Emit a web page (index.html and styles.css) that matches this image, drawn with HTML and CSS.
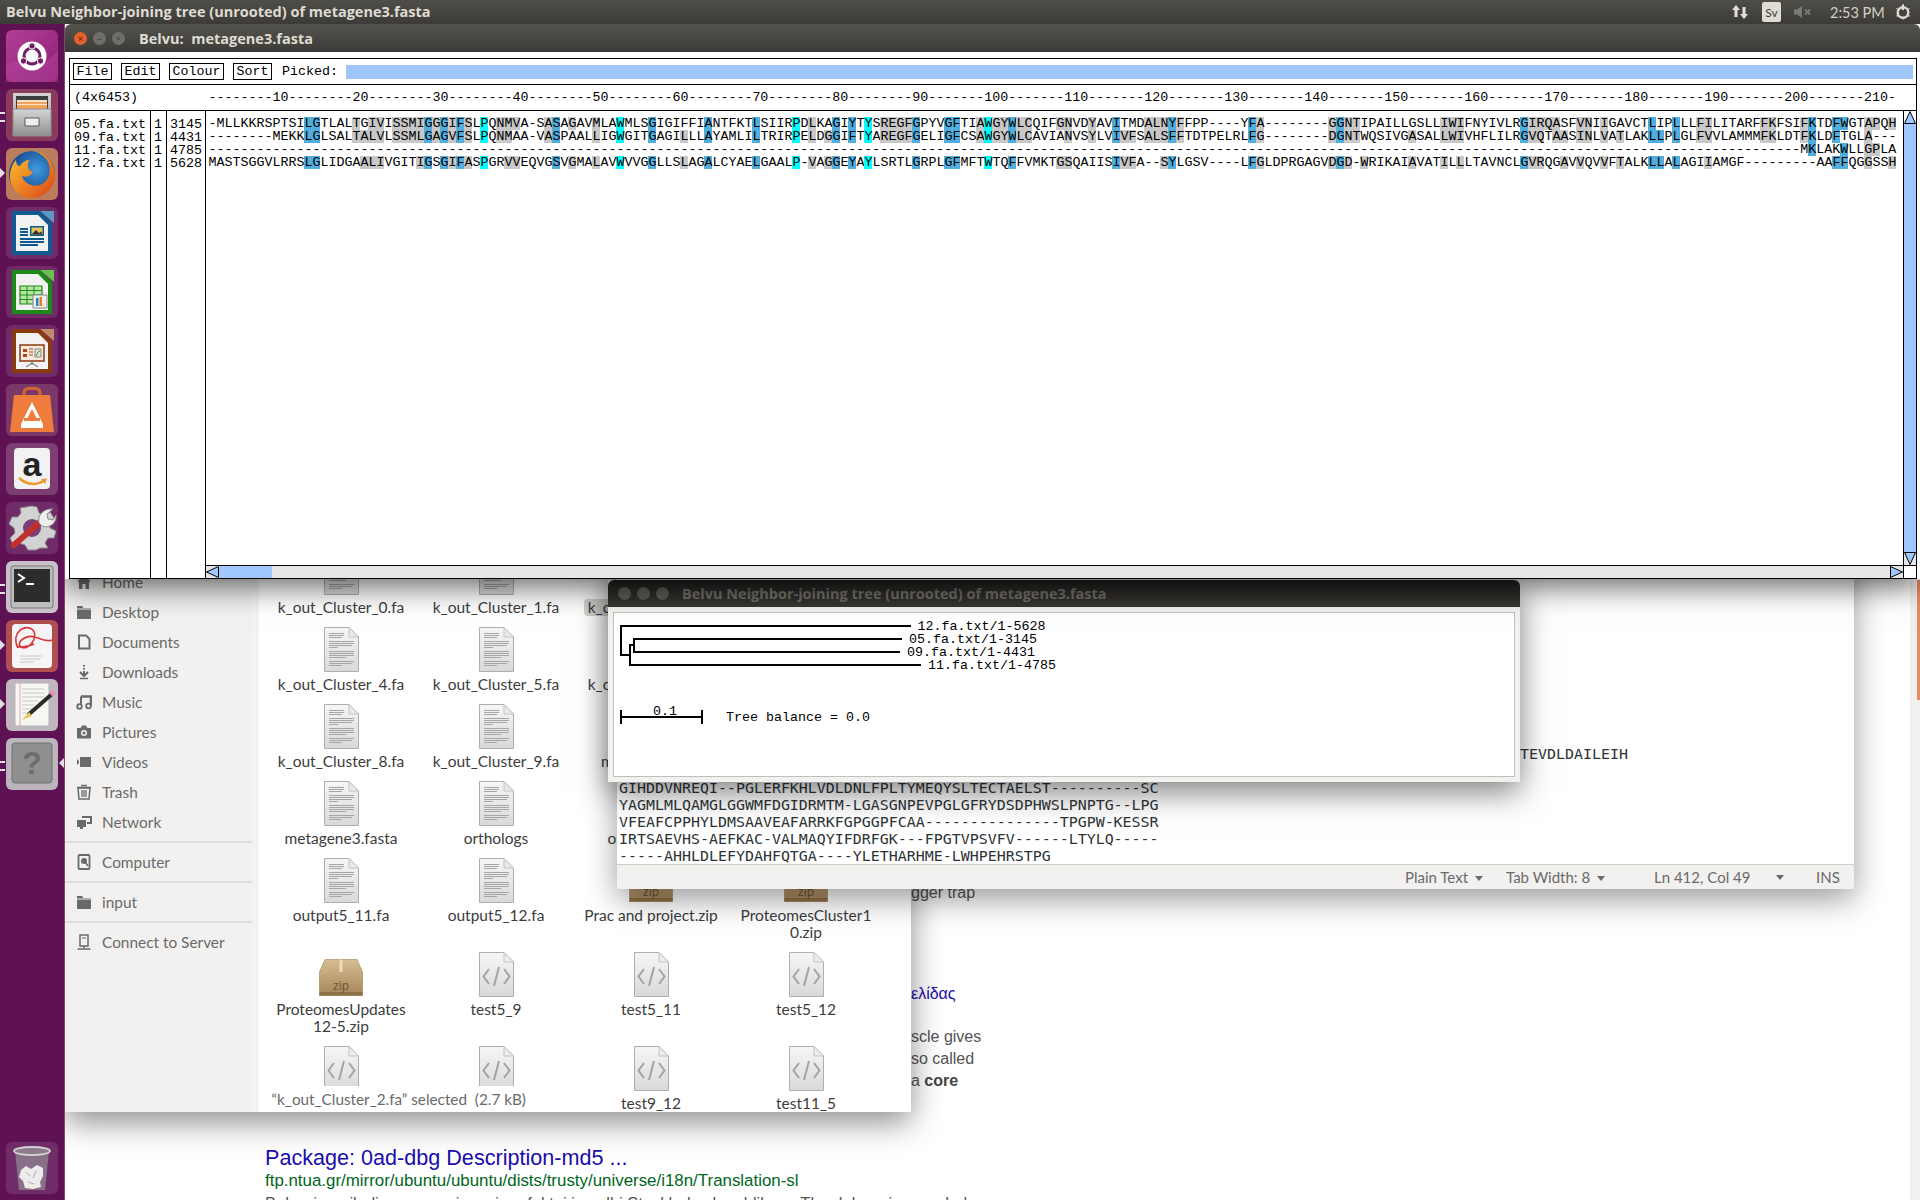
FILE: index.html
```html
<!DOCTYPE html>
<html lang="en">
<head>
<meta charset="utf-8">
<title>Belvu desktop</title>
<link rel="stylesheet" href="styles.css">
</head>
<body>
<svg class="defs" width="0" height="0" aria-hidden="true">
  <defs>
    <linearGradient id="docfill" x1="0" y1="0" x2="0" y2="1"><stop offset="0" stop-color="#f6f6f6"/><stop offset="1" stop-color="#d9d9d9"/></linearGradient>
    <linearGradient id="zipfill" x1="0" y1="0" x2="0" y2="1"><stop offset="0" stop-color="#d8bd92"/><stop offset="1" stop-color="#a5855a"/></linearGradient>
    <linearGradient id="cabfill" x1="0" y1="0" x2="0" y2="1"><stop offset="0" stop-color="#d4d4d4"/><stop offset="1" stop-color="#8f8f8f"/></linearGradient>
    <radialGradient id="foxglobe" cx=".6" cy=".4" r=".6"><stop offset="0" stop-color="#3f9be0"/><stop offset="1" stop-color="#123f86"/></radialGradient>
    <linearGradient id="foxfur" x1="0" y1="0" x2="1" y2="1"><stop offset="0" stop-color="#ffc52e"/><stop offset="1" stop-color="#d9431a"/></linearGradient>
    <symbol id="doc" viewBox="0 0 35 45">
      <path d="M.5.5H25L34.5 10V44.5H.5Z" fill="url(#docfill)" stroke="#aeaeae"/>
      <path d="M25 .5V10H34.5Z" fill="#e9e9e9" stroke="#c4c4c4"/>
      <path d="M5 6.500H20M5 8.500H20M5 10.500H18M5 14.500H30M5 16.500H30M5 18.500H28M5 20.500H14M5 24.500H30M5 26.500H30M5 28.500H30M5 30.500H22M5 34.500H30M5 36.500H28M5 38.500H18" stroke="#a6a6a6" stroke-width="1" fill="none"/>
    </symbol>
    <symbol id="code" viewBox="0 0 35 45">
      <path d="M.5.500H25L34.5 10V44.5H.5Z" fill="url(#docfill)" stroke="#aeaeae"/>
      <path d="M25 .5V10H34.5Z" fill="#ececec" stroke="#c4c4c4"/>
      <path d="M10 17L4.500 24.500L10 32M25 17L30.500 24.500L25 32M20 15L15 34" stroke="#a3a3a3" stroke-width="2" fill="none"/>
    </symbol>
    <symbol id="zip" viewBox="0 0 44 38">
      <path d="M6 .5H38L43.500 13V36.500H.5V13Z" fill="url(#zipfill)" stroke="#a08258" stroke-width=".6"/>
      <path d="M.5 13H43.500" stroke="#c9ad80"/>
      <path d="M20.500 .5H23.500V13H20.500Z" fill="#ecdcbd"/>
      <path d="M.5 33H43.500V36.500H.5Z" fill="#8f7146"/>
      <text x="22" y="31" class="zip-text">zip</text>
    </symbol>
  </defs>
</svg>
<div class="desktop">
  <header class="panel">
    <span class="panel-title">Belvu Neighbor-joining tree (unrooted) of metagene3.fasta</span>
    <div class="tray">
      <svg class="tray-net" width="18" height="18" viewBox="0 0 18 18"><path d="M5 2L1 7H3.500V14H6.500V7H9ZM13 16L17 11H14.500V4H11.500V11H9Z" fill="#e4e1da"/></svg>
      <span class="tray-kbd">Sv</span>
      <svg class="tray-mute" width="20" height="16" viewBox="0 0 20 16"><path d="M1 5.500H4L9 2V14L4 10.500H1Z" fill="#7c7a74"/><path d="M12 5.500L17 10.500M17 5.500L12 10.500" stroke="#7c7a74" stroke-width="1.800"/></svg>
      <span class="tray-time">2:53 PM</span>
      <svg class="tray-gear" width="18" height="18" viewBox="0 0 18 18"><path d="M9 1.500V7" stroke="#dfdbd2" stroke-width="2"/><circle cx="9" cy="9.500" r="5.300" fill="none" stroke="#dfdbd2" stroke-width="2.400"/><path d="M9 1L10 3H8ZM2 5L4 5.500L3.200 7ZM16 5L14 5.500L14.800 7ZM1.500 13L3.500 12L4 13.800ZM16.500 13L14.500 12L14 13.800ZM9 17L8 15.200H10Z" fill="#dfdbd2"/></svg>
    </div>
  </header>
  <div class="below">
    <nav class="launcher">
      <div class="tile t-ubuntu">
        <svg viewBox="0 0 52 52"><path d="M0 36C14 20 30 50 52 20V52H0Z" fill="#b54a9f" opacity=".45"/><circle cx="26" cy="26" r="14.500" fill="#fff"/><circle cx="26" cy="26" r="8" fill="none" stroke="#6d1f63" stroke-width="3"/><circle cx="26" cy="16" r="3.200" fill="#6d1f63" stroke="#fff"/><circle cx="17.500" cy="31" r="3.200" fill="#6d1f63" stroke="#fff"/><circle cx="34.500" cy="31" r="3.200" fill="#6d1f63" stroke="#fff"/></svg>
      </div>
      <div class="tile t-files pip2">
        <svg viewBox="0 0 52 52"><path d="M7 4H45V47H7Z" fill="url(#cabfill)"/><path d="M10 7H42V20H10Z" fill="#3e3e3e"/><path d="M11 11H41V20H11Z" fill="#f3a35a"/><path d="M11 11H41V13H11ZM11 15H41V16H11Z" fill="#fbe2c2"/><path d="M7 20H45V47H7Z" fill="url(#cabfill)" stroke="#8e8e8e"/><path d="M19 29H33V37H19Z" fill="#efefef" stroke="#5c5c5c"/></svg>
      </div>
      <div class="tile t-fox pip1">
        <svg viewBox="0 0 52 52"><circle cx="26" cy="26" r="23" fill="url(#foxglobe)"/><path d="M26 3C42 3 50 18 49 30C47 43 36 50 25 50C12 50 4 39 4 28C4 20 8 14 10 12C10 16 12 18 14 18C17 13 21 12 24 12C20 16 22 23 27 24C25 28 20 30 16 28C18 36 28 40 36 36C43 32 46 24 42 14C39 8 33 4 26 3Z" fill="url(#foxfur)"/></svg>
      </div>
      <div class="tile t-lo">
        <svg viewBox="0 0 52 52"><path d="M6 4H34L46 16V48H6Z" fill="#0f5a8e"/><path d="M10 8H32L42 18V44H10Z" fill="#f2f2f2"/><path d="M34 4H48V16Z" fill="#5a9ac4"/><path d="M14 22H22M14 25H22M14 28H22M14 32H38M14 35H38M14 38H32" stroke="#0f5a8e" stroke-width="1.800"/><path d="M24 19H38V29H24Z" fill="#0f5a8e"/><path d="M25.500 20.500H36.500V27.500H25.500Z" fill="#e9c35c"/><path d="M25.500 27.500L30 23L33 26L35 24.500L36.500 27.500Z" fill="#333"/></svg>
      </div>
      <div class="tile t-lo">
        <svg viewBox="0 0 52 52"><path d="M6 4H34L46 16V48H6Z" fill="#1d8a17"/><path d="M10 8H32L42 18V44H10Z" fill="#f2f2f2"/><path d="M34 4H48V16Z" fill="#69c24f"/><path d="M14 20H36V38H14Z" fill="#b8e5a6" stroke="#1d8a17" stroke-width="1.200"/><path d="M14 24.500H36M14 29H36M14 33.500H36M21 20V38M28 20V38" stroke="#1d8a17"/><path d="M27 29H41V42H27Z" fill="#eee" stroke="#888"/><path d="M30 32H32.500V40H30Z" fill="#2a82c9"/><path d="M33.500 31H36V40H33.500Z" fill="#e8801b"/></svg>
      </div>
      <div class="tile t-lo">
        <svg viewBox="0 0 52 52"><path d="M6 4H34L46 16V48H6Z" fill="#8a3a10"/><path d="M10 8H32L42 18V44H10Z" fill="#f2f2f2"/><path d="M34 4H48V16Z" fill="#c08a6a"/><path d="M14 20H38V36H14Z" fill="#f8e8dc" stroke="#8a3a10" stroke-width="1.500"/><path d="M17 24H21V27H17ZM17 29H21V32H17Z" fill="#a84a18"/><path d="M23 24H27M23 27H27M23 30H27" stroke="#a84a18"/><path d="M29 24H35V32H29Z" fill="#dbe8d0" stroke="#888"/><path d="M30 31L32 27L34 26" stroke="#5a9a3a" fill="none"/><path d="M26 36V40M26 38L20 42M26 38L32 42" stroke="#666"/></svg>
      </div>
      <div class="tile t-store">
        <svg viewBox="0 0 52 52"><path d="M18 12V8C18 3 34 3 34 8V12" fill="none" stroke="#d4662d" stroke-width="3"/><path d="M8 11H44L48 48H4Z" fill="#ef7c3c"/><path d="M26 18L15 40H37Z" fill="#fff"/><path d="M26 25L21 35H31Z" fill="#ef7c3c"/><path d="M15 40H37V44H15Z" fill="#fff"/><path d="M18 34H34V37H18Z" fill="#ef7c3c"/></svg>
      </div>
      <div class="tile t-amazon">
        <svg viewBox="0 0 52 52"><rect x="8" y="5" width="36" height="41" rx="4" fill="#f2f2f2"/><text x="26" y="33" class="amazon-a">a</text><path d="M13 35C22 43 32 42 39 37" stroke="#f0962a" stroke-width="2.500" fill="none"/><path d="M35 36L41 35.500L39 41Z" fill="#f0962a"/></svg>
      </div>
      <div class="tile t-tool">
        <svg viewBox="0 0 52 52"><path d="M26 4L31 5L33 11L38 13L44 10L48 16L43 21L44 26L50 29L48 36L42 36L39 41L42 46H34L30 48H22L19 43L13 41L7 42L4 36L9 31L8 26L3 22L6 15H12L15 11L14 6Z" fill="#d2d2d2" stroke="#8b8b8b"/><circle cx="26" cy="26" r="9" fill="#7c3d75"/><path d="M8 43L34 20" stroke="#c2302b" stroke-width="6" stroke-linecap="round"/><path d="M33 21C31 14 37 6 47 7L41 12L42 17L47 18L50 13C51 22 42 27 36 24Z" fill="#eee" stroke="#8a8a8a"/></svg>
      </div>
      <div class="tile t-term pip2">
        <svg viewBox="0 0 52 52"><rect x="5" y="5" width="42" height="42" rx="2" fill="#bdbdbd" stroke="#777"/><rect x="8" y="8" width="36" height="33" fill="#2c2c2c"/><path d="M12 13L18 17L12 21" stroke="#fff" stroke-width="2" fill="none"/><path d="M20 23H28" stroke="#fff" stroke-width="2"/></svg>
      </div>
      <div class="tile t-pdf pip1">
        <svg viewBox="0 0 52 52"><rect x="6" y="4" width="40" height="44" rx="4" fill="#f6f4f4"/><path d="M12 28C4 12 20 3 27 10C33 18 22 31 15 27C9 22 21 13 32 18C38 20 42 22 46 20M11 24C8 28 20 28 28 24" stroke="#d8343a" stroke-width="1.600" fill="none"/><path d="M14 36H36M14 39H34M14 42H28" stroke="#c8c8c8"/></svg>
      </div>
      <div class="tile t-edit pip1">
        <svg viewBox="0 0 52 52"><path d="M9 4H43V47H9Z" fill="#f6f6f2" stroke="#b5b5b5"/><path d="M14 4V47" stroke="#e6a6a6"/><path d="M16 10H38M16 14H38M16 18H38M16 22H32M16 26H28M16 30H26M16 34H20" stroke="#c7c7c7"/><path d="M46 15L22 36" stroke="#2b2b2b" stroke-width="4"/><path d="M45 16L48 13" stroke="#e58fb4" stroke-width="5"/><path d="M23 33L16 41L26 37Z" fill="#e8c75a"/></svg>
      </div>
      <div class="tile t-help pip2 pip-right">
        <svg viewBox="0 0 52 52"><rect x="6" y="5" width="40" height="40" rx="3" fill="#8f8f8f" stroke="#6f6f6f"/><text x="26" y="36" class="help-q">?</text></svg>
      </div>
      <div class="tile t-trash">
        <svg viewBox="0 0 52 52"><path d="M9 9H43L39 48H13Z" fill="#8a6f88"/><ellipse cx="26" cy="9" rx="18" ry="4" fill="#8d7a8b" stroke="#d2d2d2" stroke-width="1.800"/><path d="M15 28L20 24L25 27L31 23L37 26L37 34L34 40L35 45L27 47L19 46L17 39L13 35Z" fill="#ececec"/><path d="M20 30L24 34M30 29L27 36M22 40L28 42" stroke="#b5aab3"/></svg>
      </div>
    </nav>
    <main class="workspace">

      <section class="browser">
        <div class="web-frag web-trap">gger trap</div>
        <div class="web-frag web-link">ελίδας</div>
        <div class="web-frag web-para web-first">scle gives</div>
        <div class="web-frag web-para">so called</div>
        <div class="web-frag web-para">a <b>core</b></div>
        <div class="result">
          <a class="result-title">Package: 0ad-dbg Description-md5 ...</a>
          <div class="result-url">ftp.ntua.gr/mirror/ubuntu/ubuntu/dists/trusty/universe/i18n/Translation-sl</div>
          <div class="result-text">Bobru je najbolj znan po njegovi perfektni izvedbi Stockholmske oblike ... The debugging symbols</div>
        </div>
        <div class="browser-edge"><div class="browser-thumb"></div></div>
      </section>

      <section class="files">
        <aside class="sidebar">
          <div class="side-item"><svg viewBox="0 0 16 16"><path d="M8 1L1 7.500H3V15H6.500V10H9.500V15H13V7.500H15Z"/></svg>Home</div>
          <div class="side-item"><svg viewBox="0 0 16 16"><path d="M1 2H6L7.500 4H15V15H1Z"/><path d="M1 5H15" stroke="#f2f1f0"/></svg>Desktop</div>
          <div class="side-item"><svg viewBox="0 0 16 16"><path d="M3 1.500H10L13.500 5V14.500H3Z" fill="#f2f1f0" stroke="#6a6a6a" stroke-width="2"/></svg>Documents</div>
          <div class="side-item"><svg viewBox="0 0 16 16"><path d="M8 1V2.500M8 4V5.500M8 7V11M4 8L8 12L12 8" fill="none" stroke="#6a6a6a" stroke-width="2"/><path d="M4 14.500H12" stroke="#6a6a6a" stroke-width="1.500"/></svg>Downloads</div>
          <div class="side-item"><svg viewBox="0 0 16 16"><path d="M5 2.500H15V12" fill="none" stroke="#6a6a6a" stroke-width="2.500"/><path d="M5 2.500V12" stroke="#6a6a6a" stroke-width="2"/><circle cx="3.500" cy="12.500" r="2.300" fill="#f2f1f0" stroke="#6a6a6a" stroke-width="1.800"/><circle cx="12.500" cy="12" r="2.300" fill="#f2f1f0" stroke="#6a6a6a" stroke-width="1.800"/></svg>Music</div>
          <div class="side-item"><svg viewBox="0 0 16 16"><path d="M1 4H4.500L6 1.500H10L11.500 4H15V14.500H1Z"/><circle cx="8" cy="9" r="3" fill="#f2f1f0"/><circle cx="8" cy="9" r="1.500"/></svg>Pictures</div>
          <div class="side-item"><svg viewBox="0 0 16 16"><path d="M4 3H15V13H4ZM1 5L3 7V9L1 11Z"/></svg>Videos</div>
          <div class="side-item"><svg viewBox="0 0 16 16"><path d="M2 4H14L13 15H3Z" fill="none" stroke="#6a6a6a" stroke-width="1.500"/><path d="M1 3.500H15M5 1.500H11M6 6V13M8 6V13M10 6V13" stroke="#6a6a6a" stroke-width="1.300"/></svg>Trash</div>
          <div class="side-item"><svg viewBox="0 0 16 16"><path d="M1 6H10V13H1ZM4 13V15H7V13"/><path d="M6 3H15V9H11" fill="none" stroke="#6a6a6a" stroke-width="2"/></svg>Network</div>
          <div class="side-sep"></div>
          <div class="side-item"><svg viewBox="0 0 16 16"><rect x="2.500" y="1" width="11" height="14" rx="1" fill="none" stroke="#6a6a6a" stroke-width="1.800"/><circle cx="8" cy="7" r="3"/><path d="M9 8L12 12" stroke="#6a6a6a" stroke-width="1.500"/></svg>Computer</div>
          <div class="side-sep"></div>
          <div class="side-item"><svg viewBox="0 0 16 16"><path d="M1 2H6L7.500 4H15V15H1Z"/><path d="M1 5H15" stroke="#f2f1f0"/></svg>input</div>
          <div class="side-sep"></div>
          <div class="side-item"><svg viewBox="0 0 16 16"><rect x="4" y="1" width="8" height="11" fill="none" stroke="#6a6a6a" stroke-width="1.500"/><path d="M8 12V14M1.500 15H14.500" stroke="#6a6a6a" stroke-width="1.500"/><path d="M6 4H10" stroke="#6a6a6a"/></svg>Connect to Server</div>
        </aside>
        <div class="icon-grid">
          <div class="file"><svg class="i-doc"><use href="#doc"/></svg><span>k_out_Cluster_0.fa</span></div>
          <div class="file"><svg class="i-doc"><use href="#doc"/></svg><span>k_out_Cluster_1.fa</span></div>
          <div class="file"><svg class="i-doc"><use href="#code"/></svg><span class="sel">k_out_Cluster_2.fa</span></div>
          <div class="file"></div>
          <div class="file"><svg class="i-doc"><use href="#doc"/></svg><span>k_out_Cluster_4.fa</span></div>
          <div class="file"><svg class="i-doc"><use href="#doc"/></svg><span>k_out_Cluster_5.fa</span></div>
          <div class="file"><span>k_out_Cluster_6.fa</span></div>
          <div class="file"></div>
          <div class="file"><svg class="i-doc"><use href="#doc"/></svg><span>k_out_Cluster_8.fa</span></div>
          <div class="file"><svg class="i-doc"><use href="#doc"/></svg><span>k_out_Cluster_9.fa</span></div>
          <div class="file"><span>metagene3.aln</span></div>
          <div class="file"></div>
          <div class="file"><svg class="i-doc"><use href="#doc"/></svg><span>metagene3.fasta</span></div>
          <div class="file"><svg class="i-doc"><use href="#doc"/></svg><span>orthologs</span></div>
          <div class="file"><span>orthologs.txt</span></div>
          <div class="file"></div>
          <div class="file"><svg class="i-doc"><use href="#doc"/></svg><span>output5_11.fa</span></div>
          <div class="file"><svg class="i-doc"><use href="#doc"/></svg><span>output5_12.fa</span></div>
          <div class="file"><svg class="i-zip"><use href="#zip"/></svg><span>Prac and project.zip</span></div>
          <div class="file"><svg class="i-zip"><use href="#zip"/></svg><span>ProteomesCluster1<br>0.zip</span></div>
          <div class="file"><svg class="i-zip"><use href="#zip"/></svg><span>ProteomesUpdates<br>12-5.zip</span></div>
          <div class="file"><svg class="i-doc"><use href="#code"/></svg><span>test5_9</span></div>
          <div class="file"><svg class="i-doc"><use href="#code"/></svg><span>test5_11</span></div>
          <div class="file"><svg class="i-doc"><use href="#code"/></svg><span>test5_12</span></div>
          <div class="file"><svg class="i-doc"><use href="#code"/></svg></div>
          <div class="file"><svg class="i-doc"><use href="#code"/></svg></div>
          <div class="file"><svg class="i-doc"><use href="#code"/></svg><span>test9_12</span></div>
          <div class="file"><svg class="i-doc"><use href="#code"/></svg><span>test11_5</span></div>
        </div>
        <div class="selection-pill">“k_out_Cluster_2.fa” selected &nbsp;(2.7 kB)</div>
      </section>

      <section class="gedit">
        <div class="ed-lines">
          <div class="ed-line ed-tail">TEVDLDAILEIH</div>
          <div class="ed-line">&nbsp;</div>
          <div class="ed-line">GIHDDVNREQI--PGLERFKHLVDLDNLFPLTYMEQYSLTECTAELST----------SC</div>
          <div class="ed-line">YAGMLMLQAMGLGGWMFDGIDRMTM-LGASGNPEVPGLGFRYDSDPHWSLPNPTG--LPG</div>
          <div class="ed-line">VFEAFCPPHYLDMSAAVEAFARRKFGPGGPFCAA---------------TPGPW-KESSR</div>
          <div class="ed-line">IRTSAEVHS-AEFKAC-VALMAQYIFDRFGK---FPGTVPSVFV------LTYLQ-----</div>
          <div class="ed-line">-----AHHLDLEFYDAHFQTGA----YLETHARHME-LWHPEHRSTPG</div>
        </div>
        <footer class="ed-status">
          <span class="st-a">Plain Text<i class="caret"></i></span>
          <span class="st-b">Tab Width: 8<i class="caret"></i></span>
          <span class="st-c">Ln 412, Col 49</span>
          <i class="caret st-d"></i>
          <span class="st-e">INS</span>
        </footer>
      </section>

      <section class="tree-win">
        <div class="win-title tree-title">
          <div class="wm-btns">
            <span class="wm wm-dim"></span><span class="wm wm-dim"></span><span class="wm wm-dim"></span>
          </div>
          <span class="tree-title-text">Belvu Neighbor-joining tree (unrooted) of metagene3.fasta</span>
        </div>
        <div class="tree-body">
          <svg class="tree-svg" width="900" height="163" viewBox="0 0 900 163">
            <path class="tree-line" d="M7 13H297M20 26H288M20 39H286M16 52H307M7 12V43M6 42H16M16 31V53M15 32H20M20 25V40M7 104H88M7 97V111M88 97V111"/>
            <text class="tree-label" x="303.500" y="17">12.fa.txt/1-5628</text>
            <text class="tree-label" x="295" y="30">05.fa.txt/1-3145</text>
            <text class="tree-label" x="293" y="43">09.fa.txt/1-4431</text>
            <text class="tree-label" x="314" y="56">11.fa.txt/1-4785</text>
            <text class="tree-label" x="39" y="102">0.1</text>
            <text class="tree-label" x="112" y="108">Tree balance = 0.0</text>
          </svg>
        </div>
      </section>

      <section class="belvu">
        <div class="win-title belvu-title">
          <div class="wm-btns">
            <span class="wm wm-close">×</span><span class="wm wm-grey">–</span><span class="wm wm-grey">▫</span>
          </div>
          <span class="belvu-title-text">Belvu:&nbsp; metagene3.fasta</span>
        </div>
        <div class="belvu-body">
          <div class="frame">
            <div class="toolbar">
              <span class="btn">File</span>
              <span class="btn">Edit</span>
              <span class="btn">Colour</span>
              <span class="btn">Sort</span>
              <span class="picked-label">Picked:</span>
              <span class="picked-bar"></span>
            </div>
            <div class="ruler">
              <span class="ruler-size">(4x6453)</span>
              <span class="ruler-scale">--------10--------20--------30--------40--------50--------60--------70--------80--------90-------100-------110-------120-------130-------140-------150-------160-------170-------180-------190-------200-------210-</span>
            </div>
            <div class="table">
              <div class="col col-names">05.fa.txt<br>09.fa.txt<br>11.fa.txt<br>12.fa.txt</div>
              <div class="col col-one">1<br>1<br>1<br>1</div>
              <div class="col col-num">3145<br>4431<br>4785<br>5628</div>
              <div class="col-seq">
                <div class="seq">
                  <div class="seq-row">-MLLKKRSPTSI<i class="b">LG</i>TLAL<i class="g">T</i>G<i class="g">IV</i>I<i class="g">SSMI</i><i class="b">G</i><i class="g">G</i><i class="b">G</i><i class="g">I</i><i class="b">F</i><i class="g">S</i>L<i class="c">P</i>Q<i class="g">NMV</i>A-S<i class="g">A</i><i class="b">S</i>A<i class="g">G</i>AV<i class="g">M</i>LA<i class="c">W</i>MLS<i class="b">G</i>IGIFFI<i class="b">A</i>NTFKT<i class="b">L</i>SIIR<i class="c">P</i>D<i class="g">L</i>KA<i class="b">G</i>I<i class="b">Y</i>T<i class="c">Y</i>S<i class="g">REGF</i><i class="b">G</i>PYV<i class="b">GF</i>TI<i class="g">A</i><i class="c">W</i><i class="g">GY</i><i class="b">W</i><i class="g">LC</i>QIF<i class="g">GN</i>VD<i class="g">Y</i>AV<i class="b">I</i>TMD<i class="g">ALN</i><i class="b">Y</i><i class="g">F</i>FPP----Y<i class="b">F</i><i class="g">A</i>--------<i class="g">G</i><i class="b">G</i><i class="g">NT</i>IPAILLGSLL<i class="g">IWI</i>FNYIVLR<i class="b">G</i><i class="g">IRQA</i>SF<i class="g">VN</i>I<i class="g">I</i>GAVCT<i class="b">L</i>IP<i class="b">L</i>LL<i class="g">FI</i>LITARF<i class="g">FK</i>FSI<i class="g">F</i><i class="b">K</i>TD<i class="b">FW</i>GT<i class="g">AP</i>Q<i class="g">H</i></div>
                  <div class="seq-row">--------MEKK<i class="b">LG</i>LSAL<i class="g">TALV</i>L<i class="g">SSML</i><i class="b">G</i><i class="g">A</i><i class="b">G</i><i class="g">V</i><i class="b">F</i><i class="g">S</i>L<i class="c">P</i>Q<i class="g">NM</i>AA-V<i class="g">A</i><i class="b">S</i>PAAL<i class="g">L</i>IG<i class="c">W</i>GIT<i class="b">G</i>AGI<i class="g">L</i>LL<i class="b">A</i>YAMLI<i class="b">L</i>TRIR<i class="c">P</i>E<i class="g">L</i>D<i class="g">G</i><i class="b">G</i>I<i class="b">F</i>T<i class="c">Y</i>A<i class="g">REGF</i><i class="b">G</i>ELI<i class="b">GF</i>CS<i class="g">A</i><i class="c">W</i><i class="g">GY</i><i class="b">W</i><i class="g">LC</i>AVIA<i class="g">N</i>VS<i class="g">Y</i>LV<i class="b">I</i><i class="g">VF</i>S<i class="g">ALS</i><i class="b">F</i><i class="g">F</i>TDTPELRL<i class="b">F</i><i class="g">G</i>--------<i class="g">D</i><i class="b">G</i><i class="g">NT</i>WQSIVG<i class="g">A</i>SAL<i class="g">LWI</i>VHFLILR<i class="b">G</i><i class="g">VQ</i>T<i class="g">AA</i>S<i class="g">IN</i>L<i class="g">V</i>A<i class="g">T</i>LAK<i class="b">LL</i>P<i class="b">L</i>GL<i class="g">FV</i>VLAMMM<i class="g">FK</i>LDT<i class="g">F</i><i class="b">K</i>LD<i class="b">F</i>TGL<i class="g">A</i>---</div>
                  <div class="seq-row">-------------------------------------------------------------------------------------------------------------------------------------------------------------------------------------------------------M<i class="b">K</i>LAK<i class="b">W</i>LL<i class="g">GP</i>LA</div>
                  <div class="seq-row">MASTSGGVLRRS<i class="b">LG</i>LIDGA<i class="g">ALI</i>VGIT<i class="g">I</i><i class="b">G</i>S<i class="b">G</i><i class="g">I</i><i class="b">F</i><i class="g">A</i>S<i class="c">P</i>GR<i class="g">VV</i>EQVG<i class="b">S</i>V<i class="g">G</i>MA<i class="g">L</i>AV<i class="c">W</i>VVG<i class="b">G</i>LLS<i class="g">L</i>AG<i class="b">A</i>LCYAE<i class="b">L</i>GAAL<i class="c">P</i>-<i class="g">V</i>A<i class="g">G</i><i class="b">G</i>E<i class="b">Y</i>A<i class="c">Y</i>LSRTL<i class="b">G</i>RPL<i class="b">GF</i>MFT<i class="c">W</i>TQ<i class="b">F</i>FVMKT<i class="g">GS</i>QAIIS<i class="b">I</i><i class="g">VF</i>A--<i class="g">S</i><i class="b">Y</i>LGSV----L<i class="b">F</i><i class="g">G</i>LDPRGAGV<i class="g">D</i><i class="b">G</i><i class="g">D</i>-<i class="g">W</i>RIKAI<i class="g">A</i>VAT<i class="g">I</i>L<i class="g">L</i>LTAVNCL<i class="b">G</i><i class="g">VR</i>QG<i class="g">A</i>V<i class="g">V</i>QV<i class="g">V</i>F<i class="g">T</i>ALK<i class="b">LL</i>A<i class="b">L</i>AGI<i class="g">I</i>AMGF---------AA<i class="b">FF</i>QG<i class="g">G</i>SS<i class="g">H</i></div>
                </div>
                <div class="hscroll">
                  <svg class="arrow" viewBox="0 0 13 12"><path d="M12.500 .5V11.500L.5 6Z" fill="#a0c8ff" stroke="#000"/></svg>
                  <span class="hthumb"></span>
                  <span class="htrack"></span>
                  <svg class="arrow" viewBox="0 0 13 12"><path d="M.5 .5V11.500L12.500 6Z" fill="#a0c8ff" stroke="#000"/></svg>
                </div>
              </div>
              <div class="vscroll">
                <svg class="varrow" viewBox="0 0 12 13"><path d="M.5 12.500H11.500L6 .5Z" fill="#a0c8ff" stroke="#000"/></svg>
                <span class="vthumb"></span>
                <svg class="varrow varrow-down" viewBox="0 0 12 13"><path d="M.5 .5H11.500L6 12.500Z" fill="#a0c8ff" stroke="#000"/></svg>
                <span class="corner"></span>
              </div>
            </div>
          </div>
        </div>
      </section>

    </main>
  </div>
</div>
</body>
</html>
```
FILE: styles.css
```css
* { box-sizing: border-box; }
html, body { margin: 0; padding: 0; }
body { width: 1920px; height: 1200px; overflow: hidden; font-family: "Lato", "Open Sans", sans-serif; background: #fff; }
.defs { position: absolute; }

.desktop { display: flex; flex-direction: column; width: 1920px; height: 1200px; }

/* top panel */
.panel { flex: 0 0 24px; display: flex; align-items: center; padding-left: 6px; background: linear-gradient(#4f4d47, #3c3b37); position: relative; z-index: 5; }
.panel-title { margin-top: -2px; font-family: "Open Sans", sans-serif; font-size: 14.5px; font-weight: 700; color: #dfdbd2; white-space: nowrap; }
.tray { margin-left: auto; display: flex; align-items: center; }
.tray-net { margin-right: 13px; }
.tray-kbd { width: 19px; height: 20px; border-radius: 2px; background: #dfdbd2; color: #3c3b37; font-size: 12px; display: flex; align-items: center; justify-content: center; margin-right: 12px; }
.tray-mute { margin-right: 17px; }
.tray-time { font-size: 14.5px; color: #d2cfc6; width: 64px; }
.tray-gear { margin-right: 8px; }

.below { flex: 1; display: flex; min-height: 0; }

/* launcher */
.launcher { flex: 0 0 65px; display: flex; flex-direction: column; gap: 7px; padding: 6px 6px 6px; background: #5e1253; border-right: 1px solid #7a4a72; position: relative; z-index: 4; }
.tile { position: relative; width: 52px; height: 52px; border-radius: 6px; flex: none; }
.tile svg { display: block; width: 52px; height: 52px; }
.t-ubuntu { background: linear-gradient(135deg, #b23f95, #8c1f78); }
.t-files { background: #8a3b5d; }
.t-fox { background: #bb7d5c; }
.t-lo { background: #6f2c69; }
.t-store { background: #7a3868; }
.t-amazon { background: #7c3d72; }
.t-tool { background: #6f2c69; }
.t-term { background: #c9c1c8; }
.t-pdf { background: #b14f50; }
.t-edit { background: #bfb6be; }
.t-help { background: #bdb5bc; }
.t-trash { background: #6f2c69; margin-top: auto; }
.pip1::before { content: ""; position: absolute; left: -6px; top: 20px; border: 5px solid transparent; border-left: 5px solid #e0e0e0; border-right: 0; }
.pip2::before { content: ""; position: absolute; left: -6px; top: 23px; width: 5px; height: 6px; border-top: 2px solid #e0e0e0; border-bottom: 2px solid #e0e0e0; }
.pip-right::after { content: ""; position: absolute; right: -6px; top: 20px; border: 5px solid transparent; border-right: 5px solid #e0e0e0; border-left: 0; }
.amazon-a { font-family: "Liberation Sans", sans-serif; font-weight: 700; font-size: 34px; text-anchor: middle; fill: #222; }
.help-q { font-family: "Liberation Sans", sans-serif; font-weight: 700; font-size: 32px; text-anchor: middle; fill: #6d6d6d; }
.zip-text { font-family: "Open Sans", sans-serif; font-size: 12px; text-anchor: middle; fill: #6a5230; }

/* desktop windows */
.workspace { flex: 1; position: relative; overflow: hidden; background: #fff; }
.browser, .files, .gedit, .tree-win, .belvu { position: absolute; }

/* web browser behind everything */
.browser { left: 0; top: 556px; right: 0; bottom: 0; padding-top: 301px; background: #fff; font-family: "Liberation Sans", sans-serif; color: #545454; font-size: 16px; line-height: 22px; }
.browser-edge { position: absolute; right: 0; top: 0; bottom: 0; width: 10px; background: #f1f0ef; }
.browser-thumb { position: absolute; right: 0; top: 0; width: 3px; height: 120px; background: #e58a62; }
.web-frag { margin-left: 846px; }
.web-trap { margin-top: 1px; }
.web-link { margin-top: 79px; color: #1a0dab; }
.web-first { margin-top: 21px; }
.web-para b { color: #444; }
.result { margin: 53px 0 0 200px; }
.result-title { display: block; font-size: 21.6px; line-height: 26px; color: #1a0dab; }
.result-url { font-size: 16.9px; line-height: 19px; color: #006621; }
.result-text { font-size: 16.5px; line-height: 20px; margin-top: 3px; color: #545454; white-space: nowrap; }

/* file manager */
.files { left: 0; top: 516px; width: 846px; height: 572px; display: flex; background: #fff; box-shadow: 0 10px 30px rgba(0,0,0,.45); overflow: hidden; }
.sidebar { flex: 0 0 193.5px; padding-top: 27px; background: #f2f1f0; border-right: 6px solid #f4f3f2; font-size: 15.4px; color: #6a6a6a; }
.side-item { display: flex; align-items: center; gap: 10px; height: 30px; padding-left: 11px; white-space: nowrap; width: 187px; }
.side-item svg { width: 16px; height: 16px; fill: #6a6a6a; flex: none; }
.side-sep { height: 2px; width: 187px; margin: 4px 0; background: #dedcda; }
.icon-grid { flex: 1; display: grid; grid-template-columns: repeat(4, 155px); grid-template-rows: repeat(4, 77px) repeat(3, 94px); padding: 10px 0 0 5px; font-size: 15.5px; line-height: 17px; color: #3c3c3c; }
.file { display: flex; flex-direction: column; align-items: center; text-align: center; padding-top: 45px; position: relative; }
.file span { margin-top: 4px; white-space: nowrap; padding: 0 4px; }
.file span.sel { background: #d6d4d1; border-radius: 4px; }
.i-doc { position: absolute; left: 60px; top: 0; width: 35px; height: 45px; }
.i-zip { position: absolute; left: 55.5px; top: 7px; width: 44px; height: 38px; }
.selection-pill { position: absolute; left: 193.5px; bottom: 0; width: 283px; height: 26px; padding: 4px 0 0 13px; background: #fff; border-top-right-radius: 4px; font-size: 15.3px; color: #6a6a6a; white-space: nowrap; }

/* text editor */
.gedit { left: 552px; top: 500px; width: 1237px; height: 365px; display: flex; flex-direction: column; justify-content: flex-end; background: #fff; box-shadow: 0 10px 30px rgba(0,0,0,.4); }
.ed-lines { padding-left: 2px; font-family: "DejaVu Sans Mono", monospace; font-size: 14.95px; color: #2e3436; }
.ed-line { white-space: pre; height: 17px; line-height: 19px; }
.ed-tail { padding-left: 901px; }
.ed-status { flex: 0 0 25px; display: flex; align-items: center; background: #f2f1f0; border-top: 1px solid #cfcdca; font-size: 15px; color: #6a6a6a; white-space: nowrap; }
.st-a { margin-left: 788px; width: 101px; }
.st-b { width: 148px; }
.st-c { width: 115px; }
.st-d { width: 0; margin-right: 32px; }
.caret { display: inline-block; margin-left: 7px; vertical-align: 2px; border: 4px solid transparent; border-top: 5px solid #6a6a6a; border-bottom: 0; }

/* title bars */
.win-title { display: flex; align-items: center; border-radius: 6px 6px 0 0; }
.wm-btns { display: flex; align-items: center; }
.wm { display: flex; align-items: center; justify-content: center; width: 13px; height: 13px; border-radius: 50%; font-size: 10px; line-height: 1; }

/* tree window */
.tree-win { left: 543px; top: 556px; width: 912px; height: 202px; display: flex; flex-direction: column; background: #f2f1f0; box-shadow: 0 10px 30px rgba(0,0,0,.5); }
.tree-title { flex: 0 0 27px; background: linear-gradient(#1f1e1c, #383733); padding-left: 10px; }
.tree-title .wm-btns { gap: 6px; }
.wm-dim { background: #5a5955; }
.tree-title-text { margin-left: 13px; font-family: "Open Sans", sans-serif; font-size: 14.5px; font-weight: 700; color: #6f6d67; white-space: nowrap; }
.tree-body { flex: 1; margin: 5px; border: 1px solid #c2beb8; background: #fff; overflow: hidden; }
.tree-svg { display: block; }
.tree-line { fill: none; stroke: #000; stroke-width: 2; }
.tree-label { font-family: "Liberation Mono", monospace; font-size: 13.33px; fill: #000; }

/* Belvu main window */
.belvu { left: 0; top: 0; width: 1855px; height: 555px; display: flex; flex-direction: column; box-shadow: 0 8px 28px rgba(0,0,0,.6); }
.belvu-title { flex: 0 0 28px; background: linear-gradient(#55534d, #3c3b37); padding-left: 9px; }
.belvu-title .wm-btns { gap: 6px; }
.wm-close { background: #e5602f; color: #5a2410; }
.wm-grey { background: #6f6e69; color: #3a3a38; }
.belvu-title-text { margin-left: 14px; font-family: "Open Sans", sans-serif; font-size: 14.5px; font-weight: 700; color: #dfdbd2; white-space: nowrap; }
.belvu-body { flex: 1; min-height: 0; display: flex; padding: 6px 3px 0 4px; background: #fff; }
.frame { flex: 1; min-width: 0; display: flex; flex-direction: column; border: 1px solid #000; font-family: "Liberation Mono", monospace; font-size: 13.33px; line-height: 13px; color: #000; }
.toolbar { flex: 0 0 26px; display: flex; align-items: flex-start; padding: 4px 0 0 3px; border-bottom: 1px solid #000; }
.btn { height: 17px; padding: 1px 2.5px 0; margin-right: 9px; border: 1px solid #000; white-space: nowrap; }
.picked-label { margin: 2px 8px 0 1px; white-space: nowrap; }
.picked-bar { flex: 1; height: 14px; margin: 2px 3px 0 0; background: #9fc5fb; }
.ruler { flex: 0 0 26px; display: flex; align-items: center; padding-left: 4px; border-bottom: 1px solid #000; white-space: pre; }
.ruler-size { width: 134.500px; }
.table { flex: 1; min-height: 0; display: flex; }
.col { flex: none; padding-top: 7px; border-right: 1px solid #000; white-space: pre; }
.col-names { width: 81px; padding-left: 4px; }
.col-one { width: 16px; padding-left: 3px; }
.col-num { width: 39px; padding-left: 3px; }
.col-seq { flex: 1; min-width: 0; display: flex; flex-direction: column; }
.seq { flex: 1; padding: 6px 0 0 2.5px; }
.seq-row { height: 13px; white-space: pre; }
.seq i { display: inline-block; height: 13px; font-style: normal; vertical-align: top; }
.b { background: #4faedd; }
.c { background: #00ffff; }
.g { background: #c8c8c8; }
.hscroll { flex: 0 0 13px; display: flex; border-top: 1px solid #000; background: #e6e6e6; }
.arrow { flex: 0 0 13px; height: 12px; display: block; }
.hthumb { flex: 0 0 53px; background: #a0c8ff; }
.htrack { flex: 1; }
.vscroll { flex: 0 0 13px; display: flex; flex-direction: column; border-left: 1px solid #000; }
.varrow { flex: 0 0 13px; width: 12px; display: block; }
.varrow-down { background: #e6e6e6; }
.vthumb { flex: 1; background: #a0c8ff; }
.corner { flex: 0 0 13px; border-top: 1px solid #000; background: #fff; }
```
